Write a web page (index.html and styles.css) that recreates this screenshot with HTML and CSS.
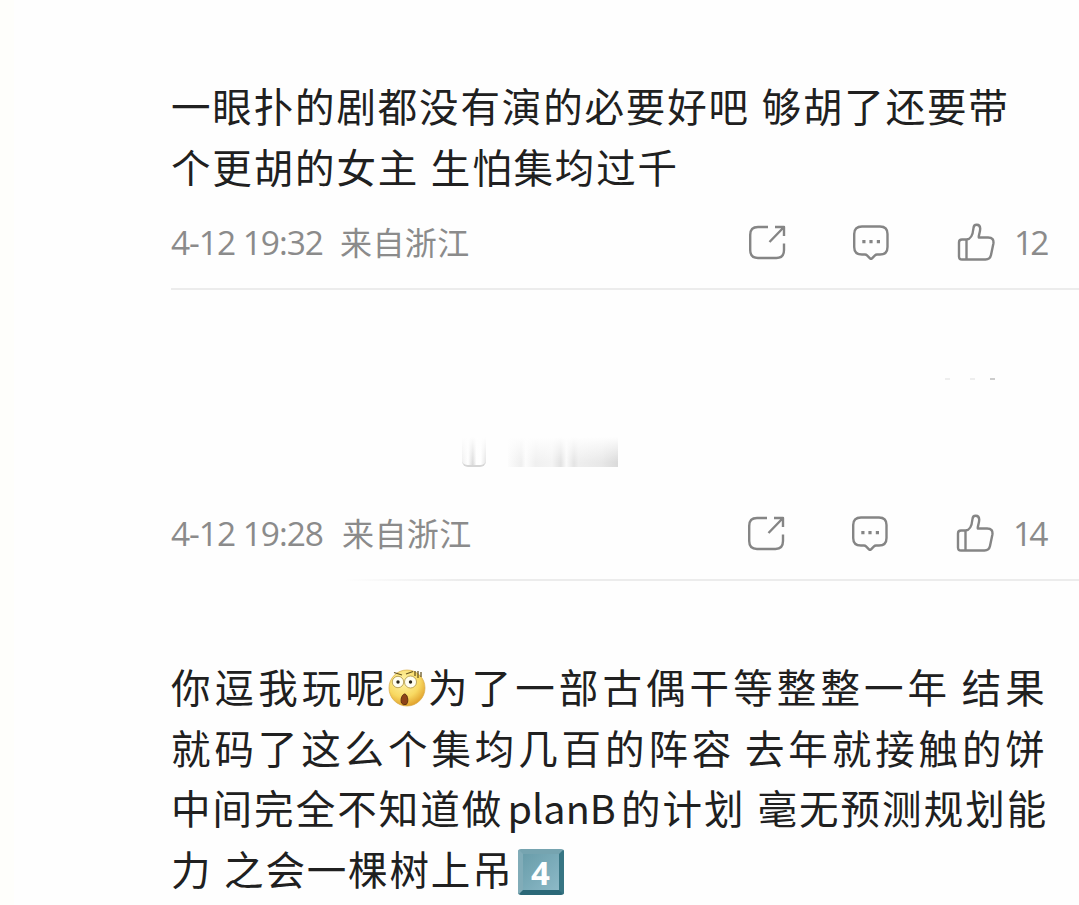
FILE: index.html
```html
<!DOCTYPE html>
<html lang="zh-CN">
<head>
<meta charset="utf-8">
<title>评论</title>
<link rel="stylesheet" href="styles.css">
</head>
<body>
<svg class="defs" width="0" height="0">
  <symbol id="share" viewBox="0 0 38 38"><path d="M20 4H10Q2.200 4 2.200 12V27Q2.200 35 10 35H28.500Q36 35 36 27V20.500M27 4H36V13M36 4 21.500 19"/></symbol>
  <symbol id="bubble" viewBox="0 0 38 38"><path d="M10 3.500H28Q35.500 3.500 35.500 11V24Q35.500 31.500 28 31.500H25Q23.800 31.500 23 32.300L20 35.300Q19 36.300 18 35.300L15 32.300Q14.200 31.500 13 31.500H10Q2.200 31.500 2.200 24V11Q2.200 3.500 10 3.500Z"/><path class="dots" d="M10.300 17h3.200v3.200h-3.200zM17.400 17h3.200v3.200h-3.200zM24.800 17h3.200v3.200h-3.200z"/></symbol>
  <symbol id="thumb" viewBox="0 0 38 38"><path d="M9.500 16.500C14 16.500 16 10 16.500 5C16.800 .5 23 .5 23.200 5.500C23.300 9.500 21 14 21.800 14.500H31Q37.500 14.500 36.300 21L34 32Q33 36.500 28.500 36.500H5Q2 36.500 2 33.500V19.500Q2 16.500 5 16.500H9.500V36.500"/></symbol>
</svg>
<main class="feed">
  <article class="comment first">
    <p class="line">一眼扑的剧都没有演的必要好吧 够胡了还要带</p>
    <p class="line">个更胡的女主 生怕集均过千</p>
    <footer class="meta">
      <span class="time">4-12 19:32</span><span class="place">来自浙江</span>
      <span class="actions"><svg class="icon"><use href="#share"/></svg><svg class="icon"><use href="#bubble"/></svg><svg class="icon"><use href="#thumb"/></svg><span class="count">12</span></span>
    </footer>
  </article>
  <article class="comment second">
    <div class="trace"><i></i><i></i><i></i></div>
    <div class="smudge"><span class="stub"></span><span class="streak"></span></div>
    <footer class="meta">
      <span class="time">4-12 19:28</span><span class="place">来自浙江</span>
      <span class="actions"><svg class="icon"><use href="#share"/></svg><svg class="icon"><use href="#bubble"/></svg><svg class="icon"><use href="#thumb"/></svg><span class="count">14</span></span>
    </footer>
  </article>
  <article class="comment third">
    <p class="line wide">你逗我玩呢<svg class="emoji" viewBox="0 0 38 38"><defs><radialGradient id="face" cx=".4" cy=".3" r=".7"><stop offset="0" stop-color="#fff5a8"/><stop offset=".65" stop-color="#f8d962"/><stop offset="1" stop-color="#e3a52f"/></radialGradient></defs><circle cx="19" cy="19" r="18" fill="url(#face)" stroke="#d7ab47" stroke-width=".7"/><g fill="#fffef0" stroke="#ad9342" stroke-width=".8"><circle cx="10" cy="13" r="5.700"/><circle cx="22.500" cy="13" r="6"/></g><g fill="#29251a"><circle cx="10" cy="13" r="1.700"/><circle cx="22.500" cy="13" r="1.700"/></g><path d="M6 3.500 14 6M18 5 25 2.500M27 2v5M30 2v7M33 3v5" fill="none" stroke="#675522" stroke-width="1.300"/><path d="M13.500 34C12 29 15 24.500 17 25C20 26 21 34 18 35.500Q15 36.500 13.500 34Z" fill="#8d4217" stroke="#60300f"/></svg>为了一部古偶干等整整一年 结果</p>
    <p class="line mid">就码了这么个集均几百的阵容 去年就接触的饼</p>
    <p class="line plan">中间完全不知道做<span class="latin">planB</span>的计划 毫无预测规划能</p>
    <p class="line">力 之会一棵树上吊<span class="keycap">4</span></p>
  </article>
</main>
</body>
</html>
```
FILE: styles.css
```css
* { box-sizing: border-box; }
body {
  margin: 0;
  background: #fefefe;
  color: #202020;
  font-family: "Noto Sans CJK SC", sans-serif;
}
.defs { display: block; }
.feed {
  width: 1079px;
  height: 905px;
  padding-left: 171px;
  overflow: hidden;
  background: linear-gradient(90deg, #fefefb 0 14px, transparent 14px);
}
.comment { display: flex; flex-direction: column; }
.first { height: 290px; padding-top: 75px; border-bottom: 2px solid #ececec; }
.second { height: 291px; padding-top: 84px; }
.second::after {
  content: "";
  height: 2px;
  margin-top: auto;
  background: linear-gradient(90deg, transparent 19%, #ececec 32%);
}
.third { padding-top: 75px; }
.line {
  display: flex;
  align-items: center;
  height: 60.600px;
  margin: 0;
  font-size: 39.500px;
  line-height: 60px;
  letter-spacing: 1.850px;
  word-spacing: 1px;
  white-space: pre;
}
.wide { letter-spacing: 4.100px; word-spacing: -2.500px; }
.mid { letter-spacing: 3.900px; word-spacing: -3px; }
.plan { letter-spacing: 2.050px; }
.meta {
  display: flex;
  align-items: center;
  height: 48px;
  padding-right: 32px;
  font-size: 32px;
  color: #8b8b8b;
}
.first .meta { margin-top: 22px; }
.time, .count {
  font-family: "Open Sans", sans-serif;
  font-weight: 400;
  font-size: 33.500px;
  line-height: 48px;
}
.time { width: 169px; letter-spacing: -1.050px; white-space: nowrap; }
.place { line-height: 44px; padding-bottom: 3px; letter-spacing: .4px; }
.second .place { padding-left: 2px; }
.actions { display: flex; align-items: center; margin-left: auto; }
.icon {
  width: 38px;
  height: 38px;
  margin-right: 66px;
  fill: none;
  stroke: #858585;
  stroke-width: 2.400;
  stroke-linejoin: round;
}
.icon:nth-of-type(2) { margin-right: 67px; }
.icon:nth-of-type(3) { margin-right: 19px; }
.dots { fill: #858585; stroke: none; }
.count { width: 33px; letter-spacing: -3px; }
.trace {
  display: flex;
  gap: 20px;
  height: 6px;
  margin: 3px 0 0 774px;
}
.trace i { width: 5px; height: 2px; margin-top: 1px; background: #eee; }
.trace i:last-child { margin-left: -5px; background: #ccc; }
.smudge {
  display: flex;
  align-items: flex-end;
  gap: 22px;
  height: 34px;
  margin: 50px 0 0 291px;
}
.stub {
  width: 24px;
  height: 30px;
  border-bottom: 2px solid #d6d6d6;
  border-radius: 0 0 6px 6px;
  background: linear-gradient(#fefefe, transparent), linear-gradient(90deg, #eee, #fff 25%, #d9d9d9 45%, #fff 60% 78%, #e2e2e2);
}
.streak {
  width: 110px;
  height: 30px;
  background: linear-gradient(#fefefe, transparent 85%), linear-gradient(90deg, #fcfcfc, #efefef 12%, #fcfcfc 16%, #f0f0f0 25%, #f4f4f4 40%, #e2e2e2 48%, #fafafa 53%, #e4e4e4 60%, #eee 64%, #e8e8e8 85%, #dadada);
}
.second .meta { margin-top: 42px; padding-right: 33px; }
.emoji { width: 38px; height: 38px; margin: 4px 2px 0 -1px; }
.latin { letter-spacing: .1px; padding: 0 5px 0 4px; }
.keycap {
  width: 46px;
  height: 46px;
  margin: 7px 0 0 4px;
  border: 5px solid;
  border-color: #76a4b0 #377583 #2b6878 #81acb8;
  border-radius: 3px;
  background: linear-gradient(135deg, #699daa, #8cb9c7);
  color: #fff;
  font: bold 33px/37px "Open Sans", sans-serif;
  letter-spacing: 0;
  text-align: center;
}
```
